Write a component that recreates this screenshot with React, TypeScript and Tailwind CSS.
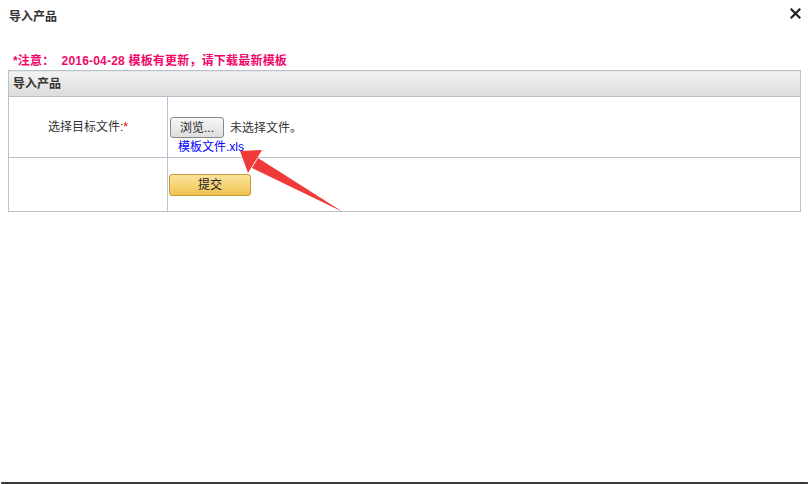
import React from 'react';

const font = { fontFamily: '"Liberation Sans", "Noto Sans CJK SC", sans-serif' };

export default function App() {
  return (
    <div className="relative w-[809px] h-[484px] bg-white overflow-hidden text-[12px] text-[#333]" style={font}>
      {/* title bar */}
      <div className="flex items-center justify-between h-[33px] pl-[9px] pr-[8px]">
        <span className="font-bold text-[#333]">导入产品</span>
        <svg width="11" height="11" viewBox="0 0 11 11" className="mb-[7px]">
          <path d="M1.5 1.5 L9.5 9.5 M9.5 1.5 L1.5 9.5" stroke="#222" strokeWidth="2.2" strokeLinecap="square" />
        </svg>
      </div>

      <div className="px-[8px] pt-[19px]">
        <div className="pl-[5px] h-[18px] leading-[18px] font-bold text-[#f0086b] tracking-[0.2px]">
          *注意：&nbsp;&nbsp;2016-04-28 模板有更新，请下载最新模板
        </div>

        <table className="w-[793px] border-collapse border border-[#b7c2cc]">
          <tbody>
            <tr>
              <td colSpan={2} className="h-[26px] pl-[4px] font-bold text-[#333] bg-gradient-to-b from-[#f2f2f2] to-[#dcdcdc] border-b border-[#b7c2cc]">
                导入产品
              </td>
            </tr>
            <tr>
              <td className="w-[159px] h-[61px] border-r border-b border-[#b7c2cc] text-center text-[#333]">
                选择目标文件:<span className="text-[#e00]">*</span>
              </td>
              <td className="border-b border-[#b7c2cc] pl-[2px] align-top pt-[20px]">
                <div className="flex items-center">
                  <button className="h-[21px] w-[54px] rounded-[3px] border border-[#8a8a8a] bg-gradient-to-b from-[#f6f6f6] to-[#dedede] text-[12px] text-[#222] leading-none">
                    浏览...
                  </button>
                  <span className="ml-[6px] text-[#333]">未选择文件。</span>
                </div>
                <a className="block ml-[8px] mt-[1px] text-[#0000ff] leading-[16px]">模板文件.xls</a>
              </td>
            </tr>
            <tr>
              <td className="h-[54px] border-r border-[#b7c2cc]" />
              <td className="pl-[1px] align-top pt-[16px]">
                <button className="h-[22px] w-[82px] rounded-[3px] border border-[#c79a3a] bg-gradient-to-b from-[#fbe39a] to-[#f0c34e] text-[12px] text-[#222] leading-none">
                  提交
                </button>
              </td>
            </tr>
          </tbody>
        </table>
      </div>

      {/* red arrow annotation */}
      <svg className="absolute left-0 top-0 pointer-events-none" width="809" height="484">
        <path d="M343 212 L258 158 L252 168 Z" fill="#f03a3a" />
        <path d="M240 151 L262 150 L248 173 Z" fill="#f03a3a" />
      </svg>

      {/* bottom edge */}
      <div className="absolute left-[1px] right-[1px] bottom-0 h-[2px] bg-[#3a3a3a] rounded-t-[1px]" />
    </div>
  );
}
